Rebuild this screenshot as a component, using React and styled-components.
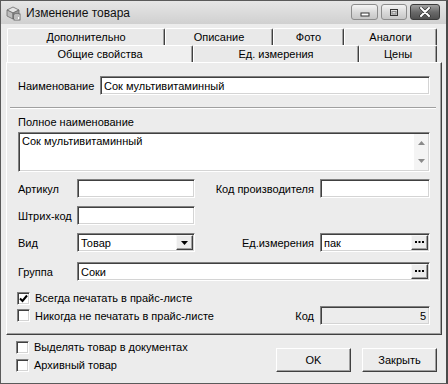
import React from 'react';
import styled, { createGlobalStyle } from 'styled-components';

const GlobalStyle = createGlobalStyle`
  html, body { margin: 0; padding: 0; background: #ececec; }
  body {
    font-family: "Liberation Sans", Arial, sans-serif;
    font-size: 11px;
    color: #000;
  }
  * { box-sizing: border-box; }
`;

const Window = styled.div`
  width: 448px;
  height: 384px;
  border: 1px solid #5a5a5a;
  border-right: 2px solid #4a4a4a;
  background: #ececec;
  display: flex;
  flex-direction: column;
`;

const TitleBar = styled.div`
  height: 23px;
  flex: none;
  display: flex;
  align-items: center;
  padding-left: 4px;
  background: linear-gradient(#e6e6e6, #d0d0d0);
`;

const TitleText = styled.span`
  margin-left: 5px;
  font-size: 12px;
  color: #111;
`;

const Controls = styled.div`
  margin-left: auto;
  margin-right: 6px;
  align-self: flex-start;
  margin-top: 3px;
  display: flex;
  gap: 3px;
`;

const CtlButton = styled.div`
  width: ${p => p.$w}px;
  height: 16px;
  border-radius: 3px;
  border: 1px solid ${p => (p.$close ? '#3a3a3a' : '#8c8c8c')};
  background: ${p =>
    p.$close
      ? 'linear-gradient(#a0a0a0, #6a6a6a 50%, #505050)'
      : 'linear-gradient(#f4f4f4, #dadada 50%, #c6c6c6)'};
  display: flex;
  align-items: center;
  justify-content: center;
`;

const Body = styled.div`
  flex: 1;
  display: flex;
  flex-direction: column;
  padding: 4px 4px 0 5px;
`;

const TabRow = styled.div`
  display: flex;
  height: 17px;
  margin-left: 1px;
`;

const Tab = styled.div`
  width: ${p => p.$w}px;
  height: 17px;
  display: flex;
  align-items: center;
  justify-content: center;
  border-top: 1px solid #fff;
  border-left: 1px solid #fff;
  border-right: 1px solid #404040;
  box-shadow: inset -1px 0 0 #a0a0a0;
  border-radius: 2px 2px 0 0;
  background: ${p => (p.$active ? '#efefef' : '#e9e9e9')};
  white-space: nowrap;
`;

const Panel = styled.div`
  height: 273px;
  flex: none;
  border: 1px solid;
  border-color: #fff #404040 #404040 #fff;
  box-shadow: inset -1px -1px 0 #a0a0a0;
  padding: 13px 11px 0 11px;
  display: flex;
  flex-direction: column;
`;

const Row = styled.div`
  display: flex;
  align-items: center;
  height: ${p => p.$h || 19}px;
  margin-top: ${p => p.$mt || 0}px;
  flex: none;
`;

const Label = styled.span`
  width: ${p => (p.$w ? `${p.$w}px` : 'auto')};
  flex: ${p => (p.$w ? 'none' : 1)};
  text-align: ${p => (p.$right ? 'right' : 'left')};
  padding-right: ${p => (p.$right ? 6 : 0)}px;
  white-space: nowrap;
`;

const Field = styled.div`
  height: ${p => p.$h || 19}px;
  width: ${p => (p.$w ? `${p.$w}px` : 'auto')};
  flex: ${p => (p.$w ? 'none' : 1)};
  background: ${p => (p.$disabled ? '#ececec' : '#fff')};
  border: 1px solid;
  border-color: #808080 #fff #fff #808080;
  box-shadow: inset 1px 1px 0 #404040, inset -1px -1px 0 #d4d4d4;
  display: flex;
  align-items: ${p => (p.$multi ? 'stretch' : 'center')};
  justify-content: ${p => (p.$right ? 'flex-end' : 'flex-start')};
  padding: ${p => (p.$right ? '0 3px 0 0' : '0 0 0 3px')};
  white-space: nowrap;
  overflow: hidden;
`;

const FieldText = styled.span`
  flex: 1;
  padding-top: ${p => (p.$top ? 2 : 0)}px;
`;

const SideButton = styled.div`
  width: 17px;
  align-self: stretch;
  margin: 1px 1px 1px 0;
  background: #ececec;
  border: 1px solid;
  border-color: #f8f8f8 #404040 #404040 #f8f8f8;
  box-shadow: inset -1px -1px 0 #a0a0a0;
  display: flex;
  align-items: center;
  justify-content: center;
`;

const ScrollCol = styled.div`
  width: 14px;
  margin: 1px 1px 1px 0;
  background: #f4f4f4;
  display: flex;
  flex-direction: column;
  justify-content: space-between;
  align-items: center;
  padding: 7px 0 7px;
`;

const Separator = styled.div`
  height: 2px;
  margin: 12px -6px 0 -8px;
  border-top: 1px solid #a0a0a0;
  border-bottom: 1px solid #fff;
  flex: none;
`;

const PlainLabel = styled.div`
  height: 14px;
  line-height: 14px;
  margin-top: 6px;
  flex: none;
`;

const CheckWrap = styled.label`
  display: flex;
  align-items: center;
  height: ${p => p.$h || 14}px;
  margin-left: -1px;
  white-space: nowrap;
`;

const Box = styled.span`
  width: 13px;
  height: 13px;
  flex: none;
  background: #fff;
  border: 1px solid;
  border-color: #808080 #fff #fff #808080;
  box-shadow: inset 1px 1px 0 #404040, inset -1px -1px 0 #d4d4d4;
  margin-right: 5px;
  display: flex;
  align-items: center;
  justify-content: center;
`;

const Footer = styled.div`
  flex: 1;
  display: flex;
  padding: 0 5px 0 11px;
`;

const FooterChecks = styled.div`
  display: flex;
  flex-direction: column;
  gap: 2px;
  padding-top: 4px;
`;

const Buttons = styled.div`
  margin-left: auto;
  margin-top: 13px;
  display: flex;
  gap: 11px;
  align-self: flex-start;
`;

const PushButton = styled.button`
  width: 75px;
  height: 24px;
  font: inherit;
  color: #000;
  background: #ececec;
  border: 1px solid;
  border-color: #fff #404040 #404040 #fff;
  box-shadow: inset -1px -1px 0 #a0a0a0;
  padding: 0;
`;

const Dots = () => (
  <svg width="9" height="3" viewBox="0 0 9 3">
    <rect x="0" y="0" width="2" height="2" fill="#000" />
    <rect x="3.5" y="0" width="2" height="2" fill="#000" />
    <rect x="7" y="0" width="2" height="2" fill="#000" />
  </svg>
);

const Arrow = ({ up, color = '#000', w = 7 }) => (
  <svg width={w} height={Math.ceil(w / 2)} viewBox="0 0 7 4">
    <path d={up ? 'M0 4 L3.5 0 L7 4 Z' : 'M0 0 L7 0 L3.5 4 Z'} fill={color} />
  </svg>
);

const Check = ({ checked, children, h }) => (
  <CheckWrap $h={h}>
    <Box>
      {checked && (
        <svg width="9" height="9" viewBox="0 0 9 9">
          <path d="M1 4.5 L3.5 7 L8 1.5" stroke="#000" strokeWidth="2" fill="none" />
        </svg>
      )}
    </Box>
    {children}
  </CheckWrap>
);

const AppIcon = () => (
  <svg width="16" height="16" viewBox="0 0 16 16">
    <path d="M2 5 L8 2 L14 5 L8 8 Z" fill="#e4e4e4" stroke="#6a6a6a" strokeWidth="0.8" />
    <path d="M2 5 L8 8 L8 14 L2 11 Z" fill="#bdbdbd" stroke="#6a6a6a" strokeWidth="0.8" />
    <path d="M14 5 L8 8 L8 14 L14 11 Z" fill="#9a9a9a" stroke="#6a6a6a" strokeWidth="0.8" />
    <rect x="9" y="9" width="6" height="6" fill="#fff" stroke="#555" strokeWidth="0.8" />
    <path d="M10 11 H14 M10 13 H13" stroke="#555" strokeWidth="0.8" />
  </svg>
);

export default function App() {
  return (
    <>
      <GlobalStyle />
      <Window>
        <TitleBar>
          <AppIcon />
          <TitleText>Изменение товара</TitleText>
          <Controls>
            <CtlButton $w={27}>
              <svg width="10" height="10" viewBox="0 0 10 10">
                <rect x="1" y="6" width="8" height="3" fill="#fff" stroke="#333" strokeWidth="1" />
              </svg>
            </CtlButton>
            <CtlButton $w={26}>
              <svg width="10" height="9" viewBox="0 0 10 9">
                <rect x="1.5" y="1.5" width="7" height="6" fill="none" stroke="#333" strokeWidth="1" />
                <rect x="3" y="3.5" width="4" height="2.5" fill="none" stroke="#888" strokeWidth="1" />
              </svg>
            </CtlButton>
            <CtlButton $w={30} $close>
              <svg width="12" height="10" viewBox="0 0 12 10">
                <path d="M2 1 L10 9 M10 1 L2 9" stroke="#333" strokeWidth="3.4" strokeLinecap="round" />
                <path d="M2 1 L10 9 M10 1 L2 9" stroke="#fff" strokeWidth="2" strokeLinecap="round" />
              </svg>
            </CtlButton>
          </Controls>
        </TitleBar>

        <Body>
          <TabRow>
            <Tab $w={158}>Дополнительно</Tab>
            <Tab $w={108}>Описание</Tab>
            <Tab $w={71}>Фото</Tab>
            <Tab $w={93}>Аналоги</Tab>
          </TabRow>
          <TabRow>
            <Tab $w={186} $active>Общие свойства</Tab>
            <Tab $w={166}>Ед. измерения</Tab>
            <Tab $w={78}>Цены</Tab>
          </TabRow>

          <Panel>
            <Row>
              <Label $w={82}>Наименование</Label>
              <Field>Сок мультивитаминный</Field>
            </Row>

            <Separator />

            <PlainLabel>Полное наименование</PlainLabel>
            <Row $h={40} $mt={3}>
              <Field $h={40} $multi>
                <FieldText $top>Сок мультивитаминный</FieldText>
                <ScrollCol>
                  <Arrow up color="#8a8a8a" />
                  <Arrow color="#8a8a8a" />
                </ScrollCol>
              </Field>
            </Row>

            <Row $mt={7}>
              <Label $w={59}>Артикул</Label>
              <Field $w={118} />
              <Label $right>Код производителя</Label>
              <Field $w={110} />
            </Row>

            <Row $mt={8}>
              <Label $w={59}>Штрих-код</Label>
              <Field $w={118} />
            </Row>

            <Row $mt={8}>
              <Label $w={59}>Вид</Label>
              <Field $w={118}>
                <FieldText>Товар</FieldText>
                <SideButton>
                  <Arrow />
                </SideButton>
              </Field>
              <Label $right>Ед.измерения</Label>
              <Field $w={110}>
                <FieldText>пак</FieldText>
                <SideButton>
                  <Dots />
                </SideButton>
              </Field>
            </Row>

            <Row $mt={10}>
              <Label $w={59}>Группа</Label>
              <Field>
                <FieldText>Соки</FieldText>
                <SideButton>
                  <Dots />
                </SideButton>
              </Field>
            </Row>

            <Row $h={14} $mt={10}>
              <Check checked>Всегда печатать в прайс-листе</Check>
            </Row>

            <Row $mt={1}>
              <Check>Никогда не печатать в прайс-листе</Check>
              <Label $right>Код</Label>
              <Field $w={110} $disabled $right>5</Field>
            </Row>
          </Panel>

          <Footer>
            <FooterChecks>
              <Check h={16}>Выделять товар в документах</Check>
              <Check h={16}>Архивный товар</Check>
            </FooterChecks>
            <Buttons>
              <PushButton>OK</PushButton>
              <PushButton>Закрыть</PushButton>
            </Buttons>
          </Footer>
        </Body>
      </Window>
    </>
  );
}
